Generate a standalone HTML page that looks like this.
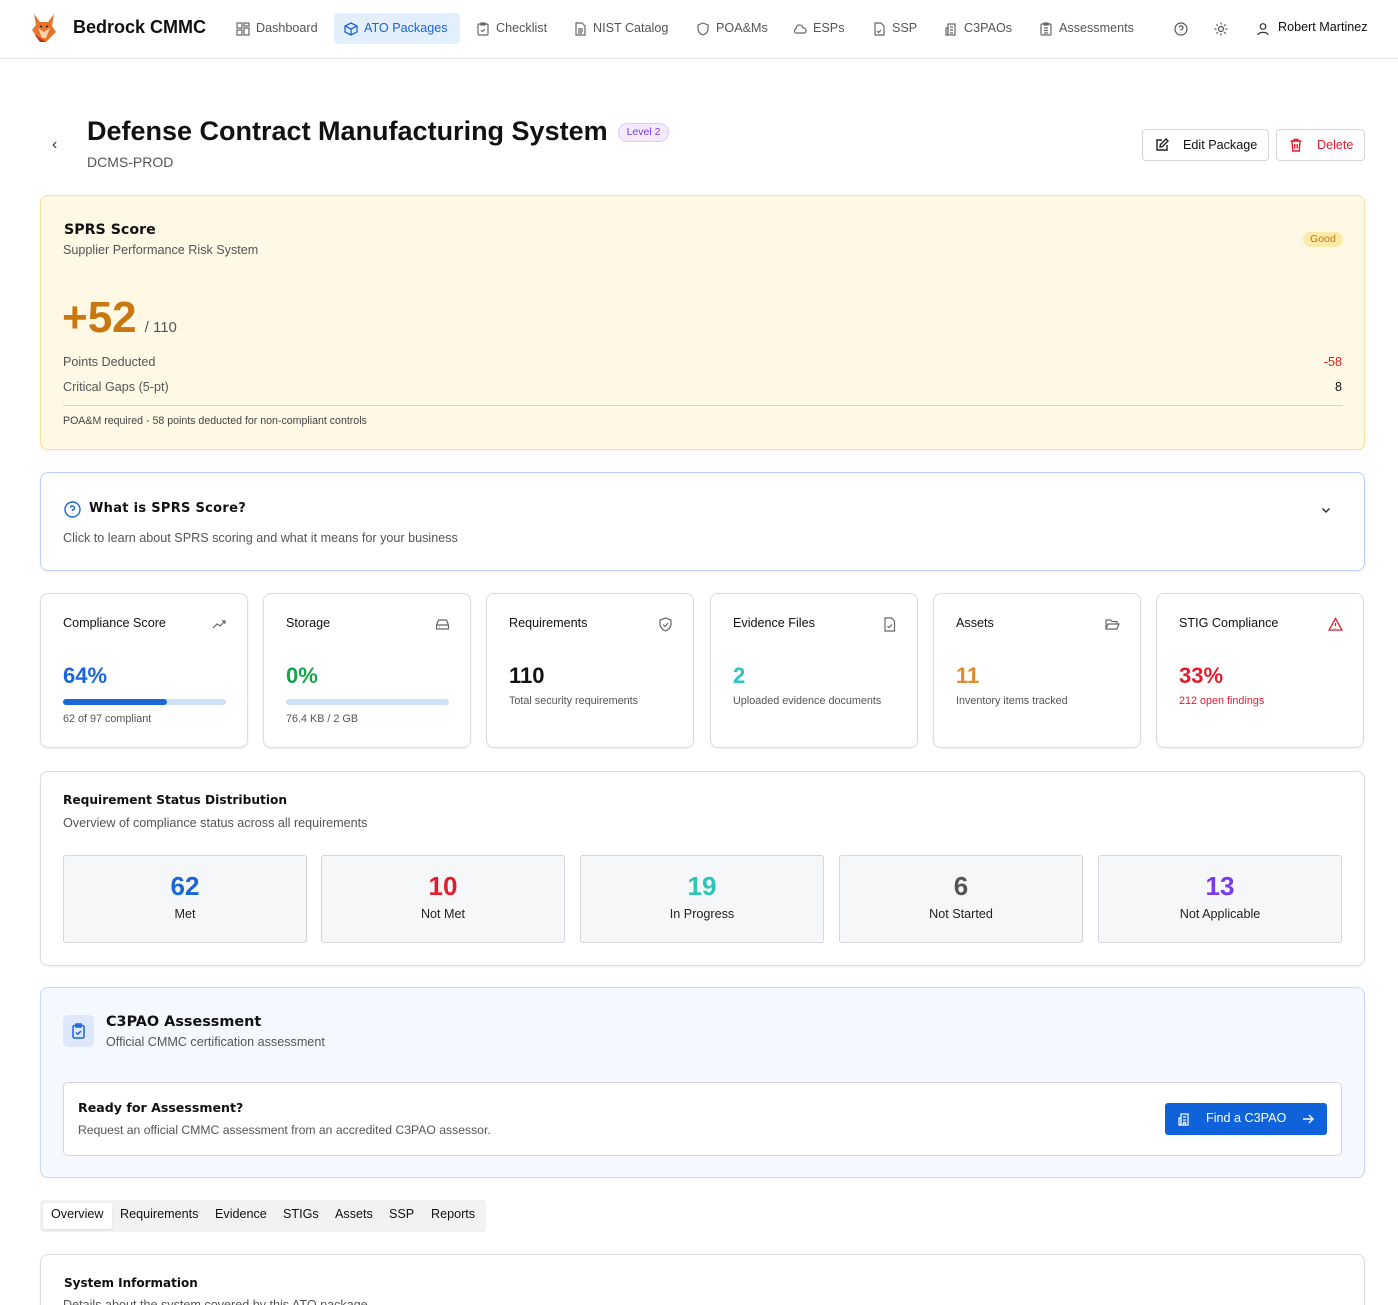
<!DOCTYPE html>
<html><head><meta charset="utf-8"><style>
*{box-sizing:border-box;margin:0;padding:0}
html,body{width:1398px;height:1305px;overflow:hidden}
body{background:#fff;font-family:"Liberation Sans",Arial,sans-serif;color:#111;position:relative}
.abs{position:absolute;white-space:nowrap}
.nav{position:absolute;left:0;top:0;width:1398px;height:59px;border-bottom:1px solid #e3e3e6;background:#fff}
.ni{position:absolute;top:13px;height:31px;line-height:31px;font-size:12.6px;color:#555;display:flex;align-items:center;gap:6px;padding:0 10px;white-space:nowrap}
.ni svg{width:14px;height:14px;flex:none}
.hd{font-family:"DejaVu Sans",sans-serif;font-weight:bold}
.card{position:absolute;border:1px solid #dcdce0;border-radius:8px;background:#fff;box-shadow:0 1px 2px rgba(0,0,0,.06)}
.sc{top:593px;width:208px;height:155px}
.sc .t{position:absolute;left:22px;top:22px;font-size:12.6px;color:#111;white-space:nowrap}
.sc .ic{position:absolute;right:20px;top:23px;width:15px;height:15px}
.sc .v{position:absolute;left:22px;top:69px;font-size:22px;font-weight:bold}
.sc .s{position:absolute;left:22px;top:101px;font-size:10.8px;color:#555;white-space:nowrap}
.st{position:absolute;top:855px;width:244px;height:88px;border:1px solid #d5d5da;border-radius:3px;background:#f6f7f9;text-align:center}
.st .n{font-size:26px;font-weight:bold;margin-top:14px;line-height:32px}
.st .l{font-size:12.6px;color:#222;margin-top:5px}
.tab{position:absolute;top:1207px;font-size:12.6px;color:#111}
</style></head><body>
<div class="nav">
 <svg class="abs" style="left:30px;top:12px" width="28" height="32" viewBox="0 0 28 32"><path d="M4 2 L10 10 L18 10 L24 2 L22 14 L26 20 L16 30 L8 26 L2 18 L6 13Z" fill="#e8742a"/><path d="M8 16 L14 20 L20 16 L16 26 L12 26Z" fill="#f6d2b0"/><path d="M10 14 L12 15 M18 14 L16 15" stroke="#222" stroke-width="1.5"/><path d="M4 22 L10 30 L16 30Z" fill="#b8321a"/></svg>
 <div class="abs" style="left:73px;top:17px;font-size:18px;font-weight:bold;color:#111">Bedrock CMMC</div>
 <div class="ni" style="left:226px"><svg viewBox="0 0 14 14" fill="none" stroke="#666" stroke-width="1.2"><rect x="1" y="1" width="5" height="5"/><rect x="8" y="1" width="5" height="3"/><rect x="1" y="8" width="5" height="5"/><rect x="8" y="6" width="5" height="7"/></svg>Dashboard</div>
 <div class="ni" style="left:334px;width:126px;background:#e3effc;border-radius:4px;color:#1a66d6"><svg viewBox="0 0 14 14" fill="none" stroke="#1a66d6" stroke-width="1.3"><path d="M7 1 L13 4 L13 10 L7 13 L1 10 L1 4Z M1 4 L7 7 L13 4 M7 7 L7 13"/></svg>ATO Packages</div>
 <div class="ni" style="left:466px"><svg viewBox="0 0 14 14" fill="none" stroke="#666" stroke-width="1.2"><rect x="2" y="2" width="10" height="11" rx="1"/><rect x="5" y="1" width="4" height="2"/><path d="M5 8 L6.5 9.5 L9 7"/></svg>Checklist</div>
 <div class="ni" style="left:563px"><svg viewBox="0 0 14 14" fill="none" stroke="#666" stroke-width="1.2"><path d="M3 1 H9 L12 4 V13 H3Z M5 7 H10 M5 9 H10 M5 11 H9"/></svg>NIST Catalog</div>
 <div class="ni" style="left:686px"><svg viewBox="0 0 14 14" fill="none" stroke="#666" stroke-width="1.2"><path d="M7 1 L12 3 V7 C12 10 9.5 12 7 13 C4.5 12 2 10 2 7 V3Z"/></svg>POA&amp;Ms</div>
 <div class="ni" style="left:783px"><svg viewBox="0 0 14 14" fill="none" stroke="#666" stroke-width="1.2"><path d="M4 11 H11 A2.5 2.5 0 0 0 10 6 A3.5 3.5 0 0 0 3 7 A2 2 0 0 0 4 11Z"/></svg>ESPs</div>
 <div class="ni" style="left:862px"><svg viewBox="0 0 14 14" fill="none" stroke="#666" stroke-width="1.2"><path d="M3 1 H9 L12 4 V13 H3Z M5 9 L6.5 10.5 L9 8"/></svg>SSP</div>
 <div class="ni" style="left:934px"><svg viewBox="0 0 14 14" fill="none" stroke="#666" stroke-width="1.2"><rect x="4" y="2" width="7" height="11"/><path d="M2 6 H4 V13 H2Z M6 5H9 M6 8H9 M6 11H9"/></svg>C3PAOs</div>
 <div class="ni" style="left:1029px"><svg viewBox="0 0 14 14" fill="none" stroke="#666" stroke-width="1.2"><rect x="2" y="2" width="10" height="11" rx="1"/><rect x="5" y="1" width="4" height="2"/><path d="M5 6H9 M5 8.5H9 M5 11H9"/></svg>Assessments</div>
 <svg class="abs" style="left:1174px;top:22px" width="14" height="14" viewBox="0 0 14 14" fill="none" stroke="#555" stroke-width="1.2"><circle cx="7" cy="7" r="6"/><path d="M5.3 5.3 A1.8 1.8 0 1 1 7 7.5 V8.5 M7 10.3 V10.6"/></svg>
 <svg class="abs" style="left:1214px;top:22px" width="14" height="14" viewBox="0 0 14 14" fill="none" stroke="#555" stroke-width="1.2"><circle cx="7" cy="7" r="2.5"/><path d="M7 0.5V2.5M7 11.5V13.5M0.5 7H2.5M11.5 7H13.5M2.4 2.4L3.8 3.8M10.2 10.2L11.6 11.6M2.4 11.6L3.8 10.2M10.2 3.8L11.6 2.4"/></svg>
 <svg class="abs" style="left:1256px;top:22px" width="14" height="14" viewBox="0 0 14 14" fill="none" stroke="#333" stroke-width="1.2"><circle cx="7" cy="4.5" r="2.8"/><path d="M2 13 C2 9.5 12 9.5 12 13"/></svg>
 <div class="abs" style="left:1278px;top:20px;font-size:12.6px;color:#111">Robert Martinez</div>
</div>

<div class="abs" style="left:52px;top:136px;font-size:16px;color:#333">‹</div>
<div class="abs" style="left:87px;top:116px;font-size:27px;font-weight:bold;color:#111">Defense Contract Manufacturing System</div>
<div class="abs" style="left:618px;top:123px;width:51px;height:19px;border:1px solid #ddc8f5;background:#f3eafd;border-radius:10px;font-size:10.5px;color:#7c3aed;text-align:center;line-height:17px">Level 2</div>
<div class="abs" style="left:87px;top:154px;font-size:14px;color:#555">DCMS-PROD</div>
<div class="abs" style="left:1142px;top:129px;width:127px;height:32px;border:1px solid #d5d5da;border-radius:4px;font-size:12.6px;color:#111;line-height:30px;padding-left:40px">Edit Package
<svg class="abs" style="left:12px;top:8px" width="14" height="14" viewBox="0 0 14 14" fill="none" stroke="#222" stroke-width="1.4"><path d="M7 2H2V12H12V7 M5 9 L5.5 6.5 L11 1 L13 3 L7.5 8.5Z"/></svg></div>
<div class="abs" style="left:1276px;top:129px;width:89px;height:32px;border:1px solid #d5d5da;border-radius:4px;font-size:12.6px;color:#e11d2e;line-height:30px;padding-left:40px">Delete
<svg class="abs" style="left:12px;top:8px" width="14" height="14" viewBox="0 0 14 14" fill="none" stroke="#e11d2e" stroke-width="1.4"><path d="M1.5 3H12.5 M5 3V1.5H9V3 M3 3L3.8 13H10.2L11 3 M5.8 6V10.5 M8.2 6V10.5"/></svg></div>

<div class="card" style="left:40px;top:195px;width:1325px;height:255px;background:#fef8e5;border-color:#f6e1a0">
 <div class="abs hd" style="left:23px;top:26px;font-size:14.2px">SPRS Score</div>
 <div class="abs" style="left:22px;top:47px;font-size:12.6px;color:#555">Supplier Performance Risk System</div>
 <div class="abs" style="left:1262px;top:36px;width:40px;height:15px;background:#fbeaa8;border-radius:8px;font-size:10.5px;color:#c07a10;text-align:center;line-height:15px">Good</div>
 <div class="abs" style="left:21px;top:97px;font-size:44px;font-weight:bold;color:#c8780e;line-height:50px">+52<span style="font-size:15px;font-weight:normal;color:#555;margin-left:8px">/ 110</span></div>
 <div class="abs" style="left:22px;top:159px;font-size:12.6px;color:#555">Points Deducted</div>
 <div class="abs" style="right:22px;top:159px;font-size:12.6px;color:#d21d1d">-58</div>
 <div class="abs" style="left:22px;top:184px;font-size:12.6px;color:#555">Critical Gaps (5-pt)</div>
 <div class="abs" style="right:22px;top:184px;font-size:12.6px;color:#111">8</div>
 <div class="abs" style="left:22px;top:209px;width:1280px;border-top:1px solid #d8d3c0"></div>
 <div class="abs" style="left:22px;top:219px;font-size:10.6px;color:#444">POA&amp;M required - 58 points deducted for non-compliant controls</div>
</div>

<div class="card" style="left:40px;top:472px;width:1325px;height:99px;border-color:#b7d3f7">
 <svg class="abs" style="left:23px;top:28px" width="17" height="17" viewBox="0 0 17 17" fill="none" stroke="#1a66d6" stroke-width="1.4"><circle cx="8.5" cy="8.5" r="7.5"/><path d="M6.5 6.5 A2 2 0 1 1 8.5 9 V10 M8.5 12 V12.4"/></svg>
 <div class="abs hd" style="left:48px;top:28px;font-size:13px;letter-spacing:.3px">What is SPRS Score?</div>
 <div class="abs" style="left:22px;top:58px;font-size:12.6px;color:#555">Click to learn about SPRS scoring and what it means for your business</div>
 <svg class="abs" style="left:1279px;top:31px" width="12" height="12" viewBox="0 0 12 12" fill="none" stroke="#333" stroke-width="1.5"><path d="M2.5 4.5 L6 8 L9.5 4.5"/></svg>
</div>

<div class="card sc" style="left:40px"><div class="t">Compliance Score</div><svg class="ic" viewBox="0 0 15 15" fill="none" stroke="#666" stroke-width="1.2"><path d="M1 11 L5 7 L8 9 L13 4 M10 4H13V7"/></svg><div class="v" style="color:#1a66d6">64%</div>
 <div class="abs" style="left:22px;top:105px;width:163px;height:6px;border-radius:3px;background:#cfe0f8"><div style="width:104px;height:6px;border-radius:3px;background:#1a66d6"></div></div><div class="s" style="top:119px">62 of 97 compliant</div></div>
<div class="card sc" style="left:263px"><div class="t">Storage</div><svg class="ic" viewBox="0 0 15 15" fill="none" stroke="#666" stroke-width="1.2"><path d="M1.5 8 L3.5 3 H11.5 L13.5 8 V12 H1.5Z M1.5 8H13.5 M4 10H4.5"/></svg><div class="v" style="color:#16a34a">0%</div>
 <div class="abs" style="left:22px;top:105px;width:163px;height:6px;border-radius:3px;background:#cfe0f8"></div><div class="s" style="top:119px">76.4 KB / 2 GB</div></div>
<div class="card sc" style="left:486px"><div class="t">Requirements</div><svg class="ic" viewBox="0 0 15 15" fill="none" stroke="#666" stroke-width="1.2"><path d="M7.5 1 L13 3 V7 C13 10.5 10 13 7.5 14 C5 13 2 10.5 2 7 V3Z M5 7.5 L7 9.5 L10 6"/></svg><div class="v" style="color:#111">110</div><div class="s">Total security requirements</div></div>
<div class="card sc" style="left:710px"><div class="t">Evidence Files</div><svg class="ic" viewBox="0 0 15 15" fill="none" stroke="#666" stroke-width="1.2"><path d="M3 1 H9.5 L12.5 4 V14 H3Z M5.5 9 L7 10.5 L10 7.5"/></svg><div class="v" style="color:#2ec4b6">2</div><div class="s">Uploaded evidence documents</div></div>
<div class="card sc" style="left:933px"><div class="t">Assets</div><svg class="ic" viewBox="0 0 15 15" fill="none" stroke="#666" stroke-width="1.2"><path d="M1 12 V3 H5.5 L7 4.5 H12 V7 M1 12 L3 7 H14 L12 12Z"/></svg><div class="v" style="color:#e08a2c">11</div><div class="s">Inventory items tracked</div></div>
<div class="card sc" style="left:1156px"><div class="t">STIG Compliance</div><svg class="ic" viewBox="0 0 15 15" fill="none" stroke="#e11d2e" stroke-width="1.3"><path d="M7.5 1.5 L14 13 H1Z M7.5 6 V9 M7.5 11 V11.4"/></svg><div class="v" style="color:#e11d2e">33%</div><div class="s" style="color:#e11d2e">212 open findings</div></div>

<div class="card" style="left:40px;top:771px;width:1325px;height:195px"></div>
<div class="abs hd" style="left:63px;top:793px;font-size:12.2px">Requirement Status Distribution</div>
<div class="abs" style="left:63px;top:816px;font-size:12.6px;color:#555">Overview of compliance status across all requirements</div>
<div class="st" style="left:63px"><div class="n" style="color:#1a66d6">62</div><div class="l">Met</div></div>
<div class="st" style="left:321px"><div class="n" style="color:#e11d2e">10</div><div class="l">Not Met</div></div>
<div class="st" style="left:580px"><div class="n" style="color:#2ec4b6">19</div><div class="l">In Progress</div></div>
<div class="st" style="left:839px"><div class="n" style="color:#555">6</div><div class="l">Not Started</div></div>
<div class="st" style="left:1098px"><div class="n" style="color:#7c3aed">13</div><div class="l">Not Applicable</div></div>

<div class="card" style="left:40px;top:987px;width:1325px;height:191px;background:#f5f8fe;border-color:#c5daf6">
 <div class="abs" style="left:22px;top:27px;width:31px;height:32px;border-radius:5px;background:#dde9fb"></div>
 <svg class="abs" style="left:30px;top:35px" width="15" height="16" viewBox="0 0 15 16" fill="none" stroke="#1a66d6" stroke-width="1.5"><rect x="2" y="2.5" width="11" height="12.5" rx="1.5"/><rect x="5" y="1" width="5" height="3"/><path d="M5 9.5 L6.8 11.2 L10 8"/></svg>
 <div class="abs hd" style="left:65px;top:26px;font-size:14.4px">C3PAO Assessment</div>
 <div class="abs" style="left:65px;top:47px;font-size:12.6px;color:#555">Official CMMC certification assessment</div>
 <div class="abs" style="left:22px;top:94px;width:1279px;height:74px;background:#fff;border:1px solid #d5d5da;border-radius:5px">
  <div class="abs hd" style="left:14px;top:17px;font-size:12.6px">Ready for Assessment?</div>
  <div class="abs" style="left:14px;top:40px;font-size:12.2px;color:#555">Request an official CMMC assessment from an accredited C3PAO assessor.</div>
  <div class="abs" style="left:1101px;top:20px;width:162px;height:32px;background:#0f62d9;border-radius:3px;color:#fff;font-size:12.6px;line-height:30px;padding-left:41px">Find a C3PAO
   <svg class="abs" style="left:12px;top:9px" width="14" height="14" viewBox="0 0 14 14" fill="none" stroke="#fff" stroke-width="1.2"><rect x="4" y="2" width="7" height="11"/><path d="M2 6H4V13H2Z M6 5H9 M6 8H9 M6.5 13V10.5H8.5V13"/></svg>
   <svg class="abs" style="left:137px;top:10px" width="12" height="12" viewBox="0 0 12 12" fill="none" stroke="#fff" stroke-width="1.4"><path d="M1 6H11 M7 2L11 6L7 10"/></svg></div>
 </div>
</div>

<div class="abs" style="left:40px;top:1200px;width:446px;height:32px;background:#f1f2f4;border-radius:4px"></div>
<div class="abs" style="left:43px;top:1203px;width:69px;height:26px;background:#fff;border-radius:3px;box-shadow:0 1px 2px rgba(0,0,0,.1)"></div>
<div class="tab abs" style="left:51px">Overview</div>
<div class="tab abs" style="left:120px">Requirements</div>
<div class="tab abs" style="left:215px">Evidence</div>
<div class="tab abs" style="left:283px">STIGs</div>
<div class="tab abs" style="left:335px">Assets</div>
<div class="tab abs" style="left:389px">SSP</div>
<div class="tab abs" style="left:431px">Reports</div>

<div class="card" style="left:40px;top:1254px;width:1325px;height:80px"></div>
<div class="abs hd" style="left:64px;top:1276px;font-size:12px">System Information</div>
<div class="abs" style="left:63px;top:1298px;font-size:12.6px;color:#555">Details about the system covered by this ATO package</div>
</body></html>
